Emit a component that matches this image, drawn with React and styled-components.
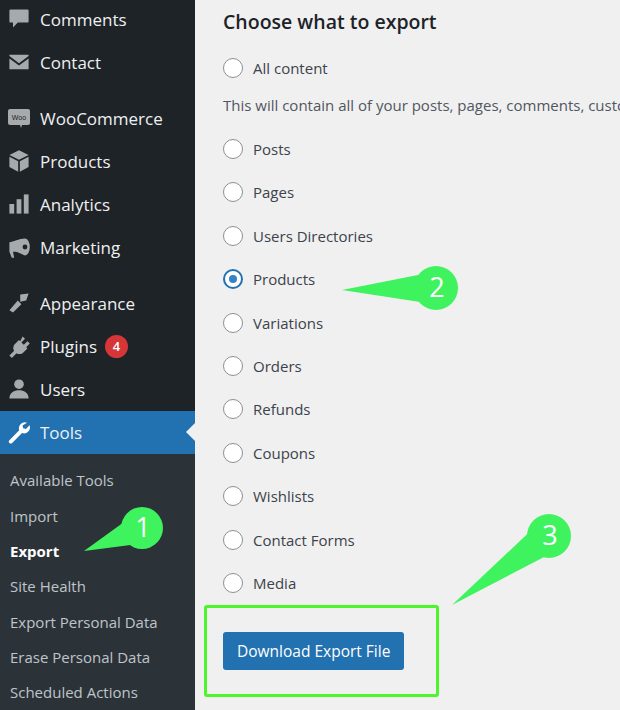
import React from "react";
import styled, { createGlobalStyle } from "styled-components";

const G = createGlobalStyle`
  html,body{margin:0;padding:0;width:620px;height:710px;overflow:hidden;}
  body{font-family:"Open Sans","Noto Sans",sans-serif;}
`;
const Page = styled.div`display:flex;width:620px;height:710px;position:relative;overflow:hidden;background:#f0f0f1;`;
const Side = styled.div`width:195px;flex:none;background:#1d2327;display:flex;flex-direction:column;`;
const Item = styled.div`
  height:43px;display:flex;align-items:center;gap:9px;padding-left:7px;font-size:17px;
  color:#f0f0f1;position:relative;
  margin-top:${p=>p.sep?13:0}px;
  background:${p=>p.active?"#2271b1":"transparent"};
  svg{width:24px;height:24px;flex:none;fill:${p=>p.active?"#fff":"#a7aaad"};}
`;
const Arrow = styled.span`position:absolute;right:0;top:12px;border:9px solid transparent;border-right-color:#f0f0f1;`;
const Badge = styled.span`background:#d63638;color:#fff;border-radius:12px;font-size:13px;font-weight:600;width:23px;height:23px;display:flex;align-items:center;justify-content:center;margin-left:-1px;`;
const Sub = styled.div`background:#2c3338;flex:1;padding-top:9px;`;
const SubItem = styled.div`height:35.3px;display:flex;align-items:center;padding-left:10px;font-size:15px;color:${p=>p.cur?"#fff":"rgba(240,246,252,.75)"};font-weight:${p=>p.cur?700:400};`;
const Main = styled.div`flex:1;padding:8px 0 0 28px;white-space:nowrap;`;
const H = styled.h2`margin:0 0 11px;font-size:19.5px;font-weight:600;color:#1d2327;`;
const Row = styled.label`height:43.4px;display:flex;align-items:center;gap:10px;font-size:15px;color:#3c434a;`;
const Radio = styled.span`width:18px;height:18px;border-radius:50%;border:1px solid #8c8f94;background:#fff;flex:none;display:flex;align-items:center;justify-content:center;
  ${p=>p.on&&`border:2px solid #2271b1;width:16px;height:16px;&::after{content:"";width:8px;height:8px;border-radius:50%;background:#3582c4;}`}`;
const Desc = styled.p`margin:6px 0 12px;font-size:15px;color:#50575e;`;
const Box = styled.div`margin:0 0 0 -19px;width:235px;height:92px;border:3px solid #4cf52c;border-radius:3px;display:flex;align-items:center;padding-left:16px;box-sizing:border-box;`;
const Btn = styled.button`background:#2271b1;color:#fff;border:none;border-radius:3px;height:38px;padding:0 14px;font-family:inherit;font-size:15.5px;`;
const Callout = styled.svg`position:absolute;overflow:visible;left:0;top:0;pointer-events:none;`;

const ic = {
  comments:<svg viewBox="0 0 20 20"><path d="M3 2h14a1 1 0 011 1v9a1 1 0 01-1 1H9l-4 4v-4H3a1 1 0 01-1-1V3a1 1 0 011-1z"/></svg>,
  contact:<svg viewBox="0 0 20 20"><path d="M2 4h16v1l-8 6-8-6zM2 7l8 6 8-6v9H2z"/></svg>,
  woo:<svg viewBox="0 0 24 24"><rect x="1" y="3" width="22" height="16" rx="2"/><path d="M13 19l1 3 1-3z"/><text x="12" y="14" fontSize="7" textAnchor="middle" fill="#1d2327" fontFamily="Liberation Sans">Woo</text></svg>,
  products:<svg viewBox="0 0 20 20"><path d="M10 1l8 4-8 4-8-4zM2 6.5l7.3 3.7V19L2 15zM18 6.5l-7.3 3.7V19L18 15z"/></svg>,
  analytics:<svg viewBox="0 0 20 20"><rect x="2" y="10" width="4" height="8"/><rect x="8" y="6" width="4" height="12"/><rect x="14" y="2" width="4" height="16"/></svg>,
  marketing:<svg viewBox="0 0 20 20"><path d="M15 3a4 7 0 010 14c-1 0-6-3-8-3H5l1 5H4l-2-5V6c3 0 8-3 13-3z"/><circle cx="15" cy="10" r="2" fill="#1d2327"/></svg>,
  appearance:<svg viewBox="0 0 20 20"><path d="M11 3l7-1-2 6-5 1zM9 8l3 3-7 7-3-2z"/></svg>,
  plugins:<svg viewBox="0 0 20 20"><path d="M13 2l2 2-3 3 2 2 3-3 2 2-3 3 1 1-4 4c-2 1-4 1-5 0l-4 4-2-2 4-4c-1-1-1-3 0-5l4-4 1 1z"/></svg>,
  users:<svg viewBox="0 0 20 20"><circle cx="10" cy="6" r="4"/><path d="M2 18c0-5 4-7 8-7s8 2 8 7z"/></svg>,
  tools:<svg viewBox="0 0 20 20"><path d="M16.7 2.3a5 5 0 00-6.5 6.3L2 16.8a1.6 1.6 0 002.3 2.3l8.2-8.2a5 5 0 006.3-6.5l-3 3-2.3-.6-.6-2.3z"/></svg>,
};

const menu=[["Comments","comments"],["Contact","contact"],["WooCommerce","woo",1],["Products","products"],["Analytics","analytics"],["Marketing","marketing"],["Appearance","appearance",1],["Plugins","plugins",0,1],["Users","users"]];
const subs=["Available Tools","Import","Export","Site Health","Export Personal Data","Erase Personal Data","Scheduled Actions"];
const opts=["Posts","Pages","Users Directories","Products","Variations","Orders","Refunds","Coupons","Wishlists","Contact Forms","Media"];

const Bubble=({cx,cy,r,tx,ty,n})=>{
  const a=Math.atan2(ty-cy,tx-cx), d=r*0.75;
  const p1=[cx+d*Math.cos(a+1.57),cy+d*Math.sin(a+1.57)], p2=[cx+d*Math.cos(a-1.57),cy+d*Math.sin(a-1.57)];
  return <g>
    <path d={`M${tx} ${ty}L${p1[0]} ${p1[1]}L${p2[0]} ${p2[1]}Z`} fill="#3ff35f"/>
    <circle cx={cx} cy={cy} r={r} fill="#3ff35f"/>
    <text x={cx+1} y={cy+9} fontSize="27" fill="#fff" textAnchor="middle" fontFamily="Open Sans">{n}</text>
  </g>;
};

export default function App(){
  return <Page><G/>
    <Side>
      <div style={{marginTop:-2}}/>
      {menu.map(([t,k,s,b])=><Item key={t} sep={s}>{ic[k]}{t}{b&&<Badge>4</Badge>}</Item>)}
      <Item active>{ic.tools}Tools<Arrow/></Item>
      <Sub>{subs.map(s=><SubItem key={s} cur={s==="Export"}>{s}</SubItem>)}</Sub>
    </Side>
    <Main>
      <H>Choose what to export</H>
      <Row><Radio/>All content</Row>
      <Desc>This will contain all of your posts, pages, comments, custom fields, terms</Desc>
      {opts.map(o=><Row key={o}><Radio on={o==="Products"}/>{o}</Row>)}
      <Box><Btn>Download Export File</Btn></Box>
    </Main>
    <Callout width="620" height="710">
      <Bubble cx={142} cy={528} r={21} tx={84} ty={551} n="1"/>
      <Bubble cx={436} cy={288} r={22} tx={342} ty={290} n="2"/>
      <Bubble cx={549} cy={536} r={22} tx={452} ty={605} n="3"/>
    </Callout>
  </Page>;
}
